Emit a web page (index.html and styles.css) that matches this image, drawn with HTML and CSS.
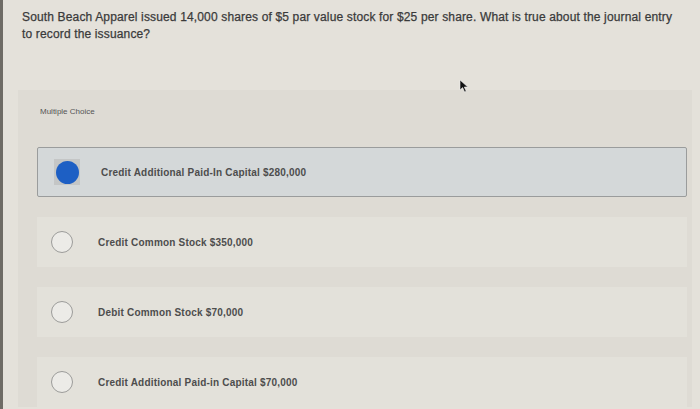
FILE: index.html
```html
<!DOCTYPE html>
<html lang="en">
<head>
    <meta charset="UTF-8">
    <meta name="viewport" content="width=device-width, initial-scale=1.0">
    <title>Multiple Choice</title>
    <link rel="stylesheet" href="styles.css">
</head>
<body>
    <p class="question">South Beach Apparel issued 14,000 shares of $5 par value stock for $25 per share. What is true about the journal entry to record the issuance?</p>

    <svg class="cursor" width="10" height="14" viewBox="0 0 10 14">
        <path d="M1 1 L1 11 L3.6 8.6 L5.6 13 L7.2 12.3 L5.3 8 L8.8 8 Z" fill="#111" stroke="#eee" stroke-width="0.6"/>
    </svg>

    <main class="panel">
        <div class="label">Multiple Choice</div>

        <div class="options">
            <label class="option selected">
                <span class="radio-wrap"><span class="radio"></span></span>
                <span class="text">Credit Additional Paid-In Capital $280,000</span>
            </label>
            <label class="option">
                <span class="radio-wrap"><span class="radio"></span></span>
                <span class="text">Credit Common Stock $350,000</span>
            </label>
            <label class="option">
                <span class="radio-wrap"><span class="radio"></span></span>
                <span class="text">Debit Common Stock $70,000</span>
            </label>
            <label class="option">
                <span class="radio-wrap"><span class="radio"></span></span>
                <span class="text">Credit Additional Paid-in Capital $70,000</span>
            </label>
        </div>
    </main>
</body>
</html>
```

FILE: styles.css
```css
body {
    margin: 0;
    padding: 0;
    height: 409px;
    overflow: hidden;
    background-color: #e4e1da;
    border-left: 3px solid #6e6b65;
    font-family: "Liberation Sans", Arial, sans-serif;
    color: #3f3f3f;
    position: relative;
}
.question {
    margin: 0;
    padding: 9px 16px 0 19px;
    font-size: 12px;
    letter-spacing: 0.15px;
    line-height: 17px;
    color: #3a3a3a;
    -webkit-text-stroke: 0.25px #3a3a3a;
}
.cursor {
    position: absolute;
    left: 456px;
    top: 79px;
}
.panel {
    margin: 47px 8px 0 15px;
    padding: 17px 0 0 0;
    background-color: #dedbd4;
    height: 300px;
}
.label {
    padding-left: 22px;
    font-size: 8px;
    line-height: 10px;
    color: #555;
}
.options {
    margin-top: 30px;
    display: flex;
    flex-direction: column;
    gap: 20px;
    padding: 0 5px 0 19px;
}
.option {
    height: 50px;
    display: flex;
    align-items: center;
    gap: 24px;
    padding-left: 13px;
    background-color: #e3e1da;
    box-sizing: border-box;
}
.option.selected {
    background-color: #d4d8d9;
    border: 1px solid #9a9c9c;
    border-radius: 2px;
    padding-left: 16px;
    gap: 21px;
}
.radio-wrap {
    width: 24px;
    height: 24px;
    display: flex;
    align-items: center;
    justify-content: center;
}
.selected .radio-wrap {
    width: 26px;
    height: 26px;
    background-color: #c4c6c6;
}
.radio {
    width: 20px;
    height: 20px;
    border-radius: 50%;
    border: 1.5px solid #9c9c9a;
    background-color: #ecebe7;
}
.selected .radio {
    width: 23px;
    height: 23px;
    border: none;
    background-color: #1d5fc4;
}
.text {
    font-size: 10px;
    font-weight: 700;
    letter-spacing: 0.2px;
    color: #4d4d4d;
}
```
